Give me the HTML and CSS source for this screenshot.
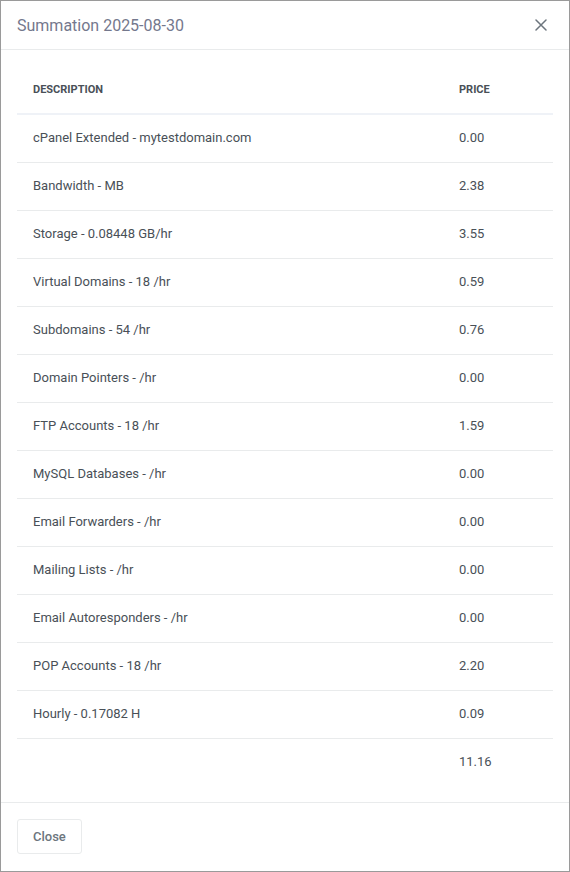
FILE: index.html
```html
<!DOCTYPE html>
<html lang="en">
<head>
    <meta charset="UTF-8">
    <meta name="viewport" content="width=device-width, initial-scale=1.0">
    <title>Summation</title>
    <link rel="stylesheet" href="styles.css">
</head>
<body>
    <div class="modal">
        <div class="modal-header">
            <h5 class="modal-title">Summation 2025-08-30</h5>
            <button class="btn-close" aria-label="Close">
                <svg width="12" height="12" viewBox="0 0 12 12">
                    <path d="M1 1 L11 11 M11 1 L1 11" stroke="#6c757d" stroke-width="1.5" stroke-linecap="round"/>
                </svg>
            </button>
        </div>

        <div class="modal-body">
            <table class="summary">
                <thead>
                    <tr>
                        <th class="col-desc">Description</th>
                        <th class="col-price">Price</th>
                    </tr>
                </thead>
                <tbody>
                    <tr><td>cPanel Extended - mytestdomain.com</td><td>0.00</td></tr>
                    <tr><td>Bandwidth - MB</td><td>2.38</td></tr>
                    <tr><td>Storage - 0.08448 GB/hr</td><td>3.55</td></tr>
                    <tr><td>Virtual Domains - 18 /hr</td><td>0.59</td></tr>
                    <tr><td>Subdomains - 54 /hr</td><td>0.76</td></tr>
                    <tr><td>Domain Pointers - /hr</td><td>0.00</td></tr>
                    <tr><td>FTP Accounts - 18 /hr</td><td>1.59</td></tr>
                    <tr><td>MySQL Databases - /hr</td><td>0.00</td></tr>
                    <tr><td>Email Forwarders - /hr</td><td>0.00</td></tr>
                    <tr><td>Mailing Lists - /hr</td><td>0.00</td></tr>
                    <tr><td>Email Autoresponders - /hr</td><td>0.00</td></tr>
                    <tr><td>POP Accounts - 18 /hr</td><td>2.20</td></tr>
                    <tr><td>Hourly - 0.17082 H</td><td>0.09</td></tr>
                    <tr class="total"><td></td><td>11.16</td></tr>
                </tbody>
            </table>
        </div>

        <div class="modal-footer">
            <button class="btn-light">Close</button>
        </div>
    </div>
</body>
</html>
```

FILE: styles.css
```css
* {
    margin: 0;
    padding: 0;
    box-sizing: border-box;
}

body {
    font-family: Roboto, 'Liberation Sans', sans-serif;
    font-size: 13px;
    color: #495057;
    background-color: #fff;
}

/* Modal */
.modal {
    width: 570px;
    height: 872px;
    border: 1px solid #9a9a9a;
    background-color: #fff;
    display: flex;
    flex-direction: column;
}

.modal-header {
    display: flex;
    justify-content: space-between;
    align-items: center;
    height: 49px;
    padding: 0 16px;
    border-bottom: 1px solid #e9ebec;
}

.modal-title {
    font-size: 16px;
    font-weight: 400;
    color: #74788d;
}

.btn-close {
    border: none;
    background: none;
    width: 24px;
    height: 24px;
    display: flex;
    align-items: center;
    justify-content: center;
    cursor: pointer;
}

.modal-body {
    padding: 16px;
    flex: 1;
}

/* Table */
.summary {
    width: 100%;
    border-collapse: collapse;
}

.summary th {
    text-align: left;
    text-transform: uppercase;
    font-size: 11px;
    font-weight: 700;
    color: #495057;
    height: 48px;
    padding: 0 16px;
    border-bottom: 2px solid #eff2f7;
}

.summary .col-price {
    width: 110px;
}

.summary td {
    height: 48px;
    padding: 0 16px 1px;
    border-bottom: 1px solid #e9ebec;
    vertical-align: middle;
}

.summary .total td {
    border-bottom: none;
    height: 47px;
}

/* Footer */
.modal-footer {
    border-top: 1px solid #e9ebec;
    padding: 16px;
    height: 69px;
}

.btn-light {
    font-family: inherit;
    font-size: 13px;
    font-weight: 500;
    color: #6c757d;
    background: #fff;
    border: 1px solid #e9ebec;
    border-radius: 3px;
    height: 35px;
    padding: 0 15px;
    cursor: pointer;
}
```
